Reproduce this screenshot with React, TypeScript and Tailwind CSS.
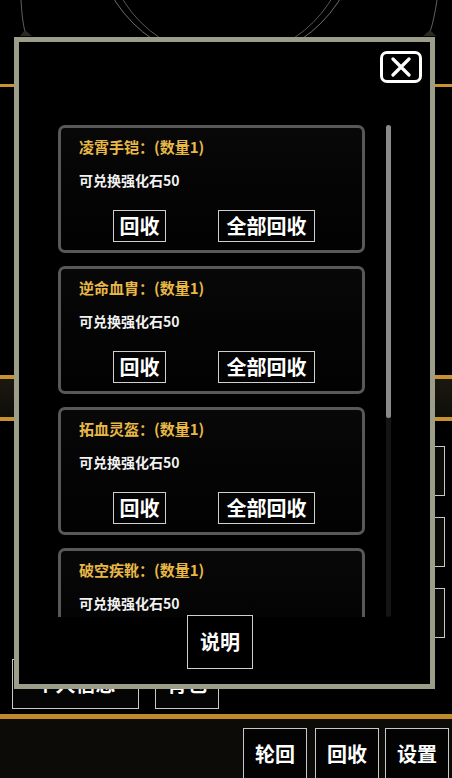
import React from "react";

const items = ["凌霄手铠", "逆命血胄", "拓血灵盔", "破空疾靴"];

function Card({ name }: { name: string }) {
  return (
    <div className="h-[128px] w-[307px] shrink-0 rounded-[7px] border-[3px] border-[#585858] bg-gradient-to-b from-[#080808] to-[#020202]">
      <div className="ml-[18px] pt-[9px] text-[15px] leading-[20px] font-bold text-[#e8b847]">
        {name}：(数量1)
      </div>
      <div className="ml-[18px] mt-[13px] text-[14px] leading-[20px] font-bold text-[#f2f2f2]">
        可兑换强化石50
      </div>
      <div className="mt-[20px] flex pl-[52px] gap-[52px]">
        <div className="flex h-[32px] w-[53px] items-center justify-center border border-[#cfcfcf] text-[20px] font-bold text-white">
          回收
        </div>
        <div className="flex h-[32px] w-[97px] items-center justify-center border border-[#cfcfcf] text-[20px] font-bold text-white">
          全部回收
        </div>
      </div>
    </div>
  );
}

export default function App() {
  return (
    <div className="relative h-[778px] w-[452px] overflow-hidden bg-black font-['Noto_Sans_CJK_SC','Noto_Sans',sans-serif]">
      {/* background page */}
      <div className="relative h-[84px]">
        <svg className="absolute inset-0" width="452" height="84" viewBox="0 0 452 84">
          <circle cx="227" cy="-71" r="133" fill="none" stroke="#8a8a84" strokeWidth="0.8" />
          <circle cx="227" cy="-64" r="122" fill="none" stroke="#6f6f6a" strokeWidth="0.8" />
          <path d="M21 0 Q22 20 25 32" fill="none" stroke="#777" strokeWidth="0.8" />
          <path d="M437 0 Q434 20 430 32" fill="none" stroke="#777" strokeWidth="0.8" />
          <path d="M20 36 L25 30 L32 36 Z" fill="#2a2a22" />
          <path d="M423 36 L430 30 L436 36 Z" fill="#2a2a22" />
        </svg>
      </div>
      <div className="h-[3px] bg-[#c8932c]" />
      <div className="h-[288px]" />
      <div className="h-[46px] border-y-4 border-[#c8932c] bg-gradient-to-b from-[#1b1810] to-[#0f0e09]" />
      <div className="h-[293px]">
        <div className="flex flex-col items-end gap-[21px] pr-[7px] pt-[25px]">
          <div className="h-[50px] w-[64px] border border-[#c8c8c8] bg-[#0b0b08]" />
          <div className="h-[50px] w-[64px] border border-[#c8c8c8] bg-[#0b0b08]" />
          <div className="h-[50px] w-[64px] border border-[#c8c8c8] bg-[#0b0b08]" />
        </div>
        <div className="mt-[21px] flex gap-[16px] pl-[12px]">
          <div className="flex h-[50px] w-[127px] items-center justify-center border border-[#c8c8c8] bg-[#050505] text-[20px] font-bold text-white">
            个人信息
          </div>
          <div className="flex h-[50px] w-[64px] items-center justify-center border border-[#c8c8c8] bg-[#050505] text-[20px] font-bold text-white">
            背包
          </div>
        </div>
      </div>
      <div className="h-[5px] bg-[#c08a28]" />
      <div className="flex h-[59px] justify-end bg-[#0c0b08] pr-[3px] pt-[9px]">
        <div className="flex h-[52px] w-[64px] items-center justify-center border-[1.5px] border-[#c8c8c8] bg-[#030303] text-[20px] font-bold text-white">
          轮回
        </div>
        <div className="ml-[8px] flex h-[52px] w-[64px] items-center justify-center border-[1.5px] border-[#c8c8c8] bg-[#030303] text-[20px] font-bold text-white">
          回收
        </div>
        <div className="ml-[6px] flex h-[52px] w-[64px] items-center justify-center border-[1.5px] border-[#c8c8c8] bg-[#030303] text-[20px] font-bold text-white">
          设置
        </div>
      </div>

      {/* modal overlay */}
      <div className="absolute left-[14px] top-[37px] flex h-[652px] w-[421px] flex-col border-[5px] border-[#9d9e89] bg-black">
        <div className="flex justify-end pr-[8px] pt-[9px]">
          <div className="flex h-[32px] w-[42px] items-center justify-center rounded-[7px] border-[3px] border-white">
            <svg width="22" height="20" viewBox="0 0 22 20">
              <path d="M3 2 L19 18 M19 2 L3 18" stroke="white" strokeWidth="3.2" strokeLinecap="round" />
            </svg>
          </div>
        </div>
        <div className="mt-[42px] flex h-[490px] pl-[39px]">
          <div className="flex h-[492px] w-[307px] flex-col gap-[13px] overflow-hidden">
            {items.map((n) => (
              <Card key={n} name={n} />
            ))}
          </div>
          <div className="ml-[21px] flex h-[492px] w-[5px] flex-col rounded-full bg-[#141414]">
            <div className="h-[293px] w-[5px] rounded-full bg-[#8a8a8a]" />
          </div>
        </div>
        <div className="ml-[168px] flex h-[54px] w-[66px] items-center justify-center border-[1.5px] border-[#cfcfcf] bg-black text-[20px] font-bold text-white">
          说明
        </div>
      </div>
    </div>
  );
}
